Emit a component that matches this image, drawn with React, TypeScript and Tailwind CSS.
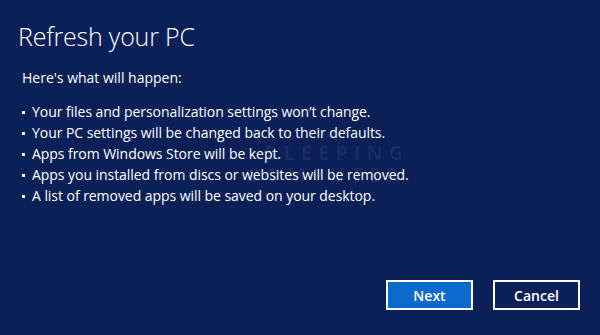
import React from "react";

const items = [
  "Your files and personalization settings won’t change.",
  "Your PC settings will be changed back to their defaults.",
  "Apps from Windows Store will be kept.",
  "Apps you installed from discs or websites will be removed.",
  "A list of removed apps will be saved on your desktop.",
];

export default function App() {
  return (
    <div
      className="relative w-[600px] h-[335px] bg-[#0a2057] text-white overflow-hidden flex flex-col"
      style={{ fontFamily: '"Open Sans", "Noto Sans", sans-serif' }}
    >
      <h1 className="pl-[18px] pt-[20px] text-[25px] leading-[32px] font-light tracking-[-0.2px]">
        Refresh your PC
      </h1>
      <p className="pl-[22px] mt-[16px] text-[14px] leading-[20px] tracking-[0px]">
        Here&#39;s what will happen:
      </p>
      <ul className="pl-[22px] mt-[13px] flex flex-col text-[14px] leading-[21px] tracking-[-0.05px]">
        {items.map((t) => (
          <li key={t} className="flex items-center">
            <span className="w-[3px] h-[3px] bg-white mr-[7px] mt-[2px]" />
            <span>{t}</span>
          </li>
        ))}
      </ul>
      <div className="absolute left-[246px] top-[142px] select-none pointer-events-none text-white/[0.06] font-bold leading-[22px] tracking-[6px] text-[20px]">
        <div className="pl-[18px]">BLEEPING</div>
        <div>COMPUTER</div>
      </div>
      <div className="mt-auto flex justify-end gap-[20px] pr-[20px] pb-[25px]">
        <button className="w-[87px] h-[30px] bg-[#0b6acb] border-2 border-white text-[14px] font-semibold">
          Next
        </button>
        <button className="w-[87px] h-[30px] bg-[#0a2057] border-2 border-white text-[14px] font-semibold">
          Cancel
        </button>
      </div>
    </div>
  );
}
